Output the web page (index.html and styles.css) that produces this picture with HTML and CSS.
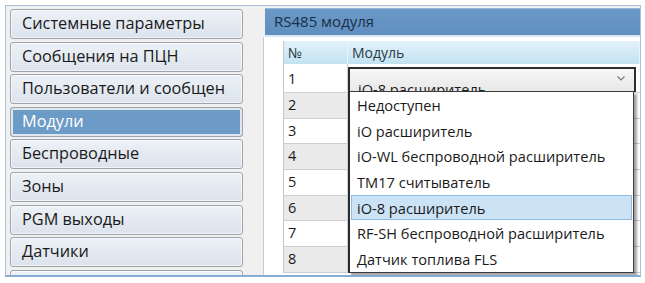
FILE: index.html
```html
<!DOCTYPE html>
<html>
<head>
<meta charset="utf-8">
<link rel="stylesheet" href="styles.css">
</head>
<body>
<div class="window">
  <nav class="sidebar">
    <div class="nav-btn">Системные параметры</div>
    <div class="nav-btn">Сообщения на ПЦН</div>
    <div class="nav-btn">Пользователи и сообщен</div>
    <div class="nav-btn active">Модули</div>
    <div class="nav-btn">Беспроводные</div>
    <div class="nav-btn">Зоны</div>
    <div class="nav-btn">PGM выходы</div>
    <div class="nav-btn">Датчики</div>
    <div class="nav-btn"></div>
  </nav>
  <section class="panel">
    <div class="panel-head">RS485 модуля</div>
    <div class="panel-body">
      <div class="grid">
        <div class="gh gh-num">№</div>
        <div class="gh">Модуль</div>

        <div class="gc num first">1</div>
        <div class="gc mod first">
          <div class="combo"><span class="combo-text">iO-8 расширитель</span><svg class="chev" width="8" height="5" viewBox="0 0 8 5"><polyline points="0.5,0.5 4,4 7.5,0.5" fill="none" stroke="#7a7a7a" stroke-width="1.2"/></svg></div>
        </div>

        <div class="gc num alt">2</div><div class="gc mod"></div>
        <div class="gc num">3</div><div class="gc mod"></div>
        <div class="gc num alt">4</div><div class="gc mod"></div>
        <div class="gc num">5</div><div class="gc mod"></div>
        <div class="gc num alt">6</div><div class="gc mod"></div>
        <div class="gc num">7</div><div class="gc mod"></div>
        <div class="gc num alt">8</div><div class="gc mod"></div>
      </div>
      <ul class="popup">
        <li>Недоступен</li>
        <li>iO расширитель</li>
        <li>iO-WL беспроводной расширитель</li>
        <li>TM17 считыватель</li>
        <li class="sel">iO-8 расширитель</li>
        <li>RF-SH беспроводной расширитель</li>
        <li>Датчик топлива FLS</li>
      </ul>
    </div>
  </section>
</div>
</body>
</html>
```

FILE: styles.css
```css
html, body {
  margin: 0;
  padding: 0;
  background: #ffffff;
}
body {
  font-family: "Open Sans", "Noto Sans", sans-serif;
  color: #1a1a1a;
}
.window {
  position: relative;
  margin: 5px 0 0 5px;
  width: 634px;
  height: 269px;
  border: 1px solid #a9bfd8;
  border-bottom: 2px solid #86acd3;
  background: #f0f0f0;
  display: flex;
  overflow: hidden;
}
.sidebar {
  width: 233px;
  padding: 3px 0 0 4px;
  display: flex;
  flex-direction: column;
  gap: 2.6px;
  flex: none;
}
.nav-btn {
  flex: none;
  box-sizing: border-box;
  height: 30px;
  border: 1px solid #a0a4aa;
  border-radius: 3px;
  background: linear-gradient(#edf1f7, #dce3ec);
  box-shadow: inset 0 0 0 1px rgba(255,255,255,0.6);
  font-size: 16.3px;
  line-height: 27px;
  padding-left: 11px;
  white-space: nowrap;
  overflow: hidden;
}
.nav-btn.active {
  background: #6d9bc8;
  color: #ffffff;
  box-shadow: inset 0 0 0 2px #dfe6ee;
}
.panel {
  margin-left: 20px;
  flex: 1;
  display: flex;
  flex-direction: column;
  padding-top: 2px;
}
.panel-head {
  margin-left: 2px;
  height: 26px;
  background: linear-gradient(#6b99c8, #5f8fc0);
  border-top: 1px solid #9bb7d6;
  border-bottom: 2px solid #dbe7f2;
  color: #1b2d42;
  font-size: 15px;
  line-height: 25px;
  padding-left: 9px;
}
.panel-body {
  position: relative;
  flex: 1;
  background: #ffffff;
  border-left: 1px solid #c9c9c9;
  padding: 4px 0 0 19px;
}
.grid {
  display: grid;
  grid-template-columns: 64px 292px;
  grid-template-rows: 23px 29px repeat(7, 25.7px);
  border-left: 1px solid #c7c7c7;
}
.gh {
  background: linear-gradient(#e4f2fa, #c2e2f1);
  border-right: 1px solid #e8f3f9;
  font-size: 14px;
  line-height: 24px;
  padding-left: 4px;
  color: #2a3a48;
}
.gc {
  border-bottom: 1px solid #cfcfcf;
  border-right: 1px solid #cfcfcf;
  font-size: 14.5px;
  padding-left: 4px;
  line-height: 24px;
  box-sizing: border-box;
}
.gc.num.alt { background: #eaeaea; }
.gc.first { line-height: 30px; }
.gc.mod { padding: 0; border-right: none; }
.combo {
  margin-top: 3px;
  height: 25px;
  box-sizing: border-box;
  border: 2px solid #2d2d2d;
  border-bottom: none;
  background: linear-gradient(#f6f6f6, #e8e8e8);
  position: relative;
  overflow: hidden;
  font-size: 14.6px;
  line-height: 20px;
  padding: 10px 0 0 8px;
  width: 288px;
}
.chev {
  position: absolute;
  right: 9px;
  top: 7px;
}
.popup {
  position: absolute;
  left: 84px;
  top: 54px;
  width: 283px;
  margin: 0;
  padding: 0;
  list-style: none;
  background: #ffffff;
  border: 1px solid #3a3a3a;
  border-left: 2px solid #2a2a2a;
  box-shadow: 3px 3px 2px rgba(0,0,0,0.35);
}
.popup li {
  height: 25.7px;
  box-sizing: border-box;
  font-size: 14.6px;
  line-height: 24px;
  padding-left: 5px;
  border: 1px solid transparent;
  margin: 0 1px;
}
.popup li.sel {
  background: #cce3f6;
  border-color: #8fbbe2;
}
```
